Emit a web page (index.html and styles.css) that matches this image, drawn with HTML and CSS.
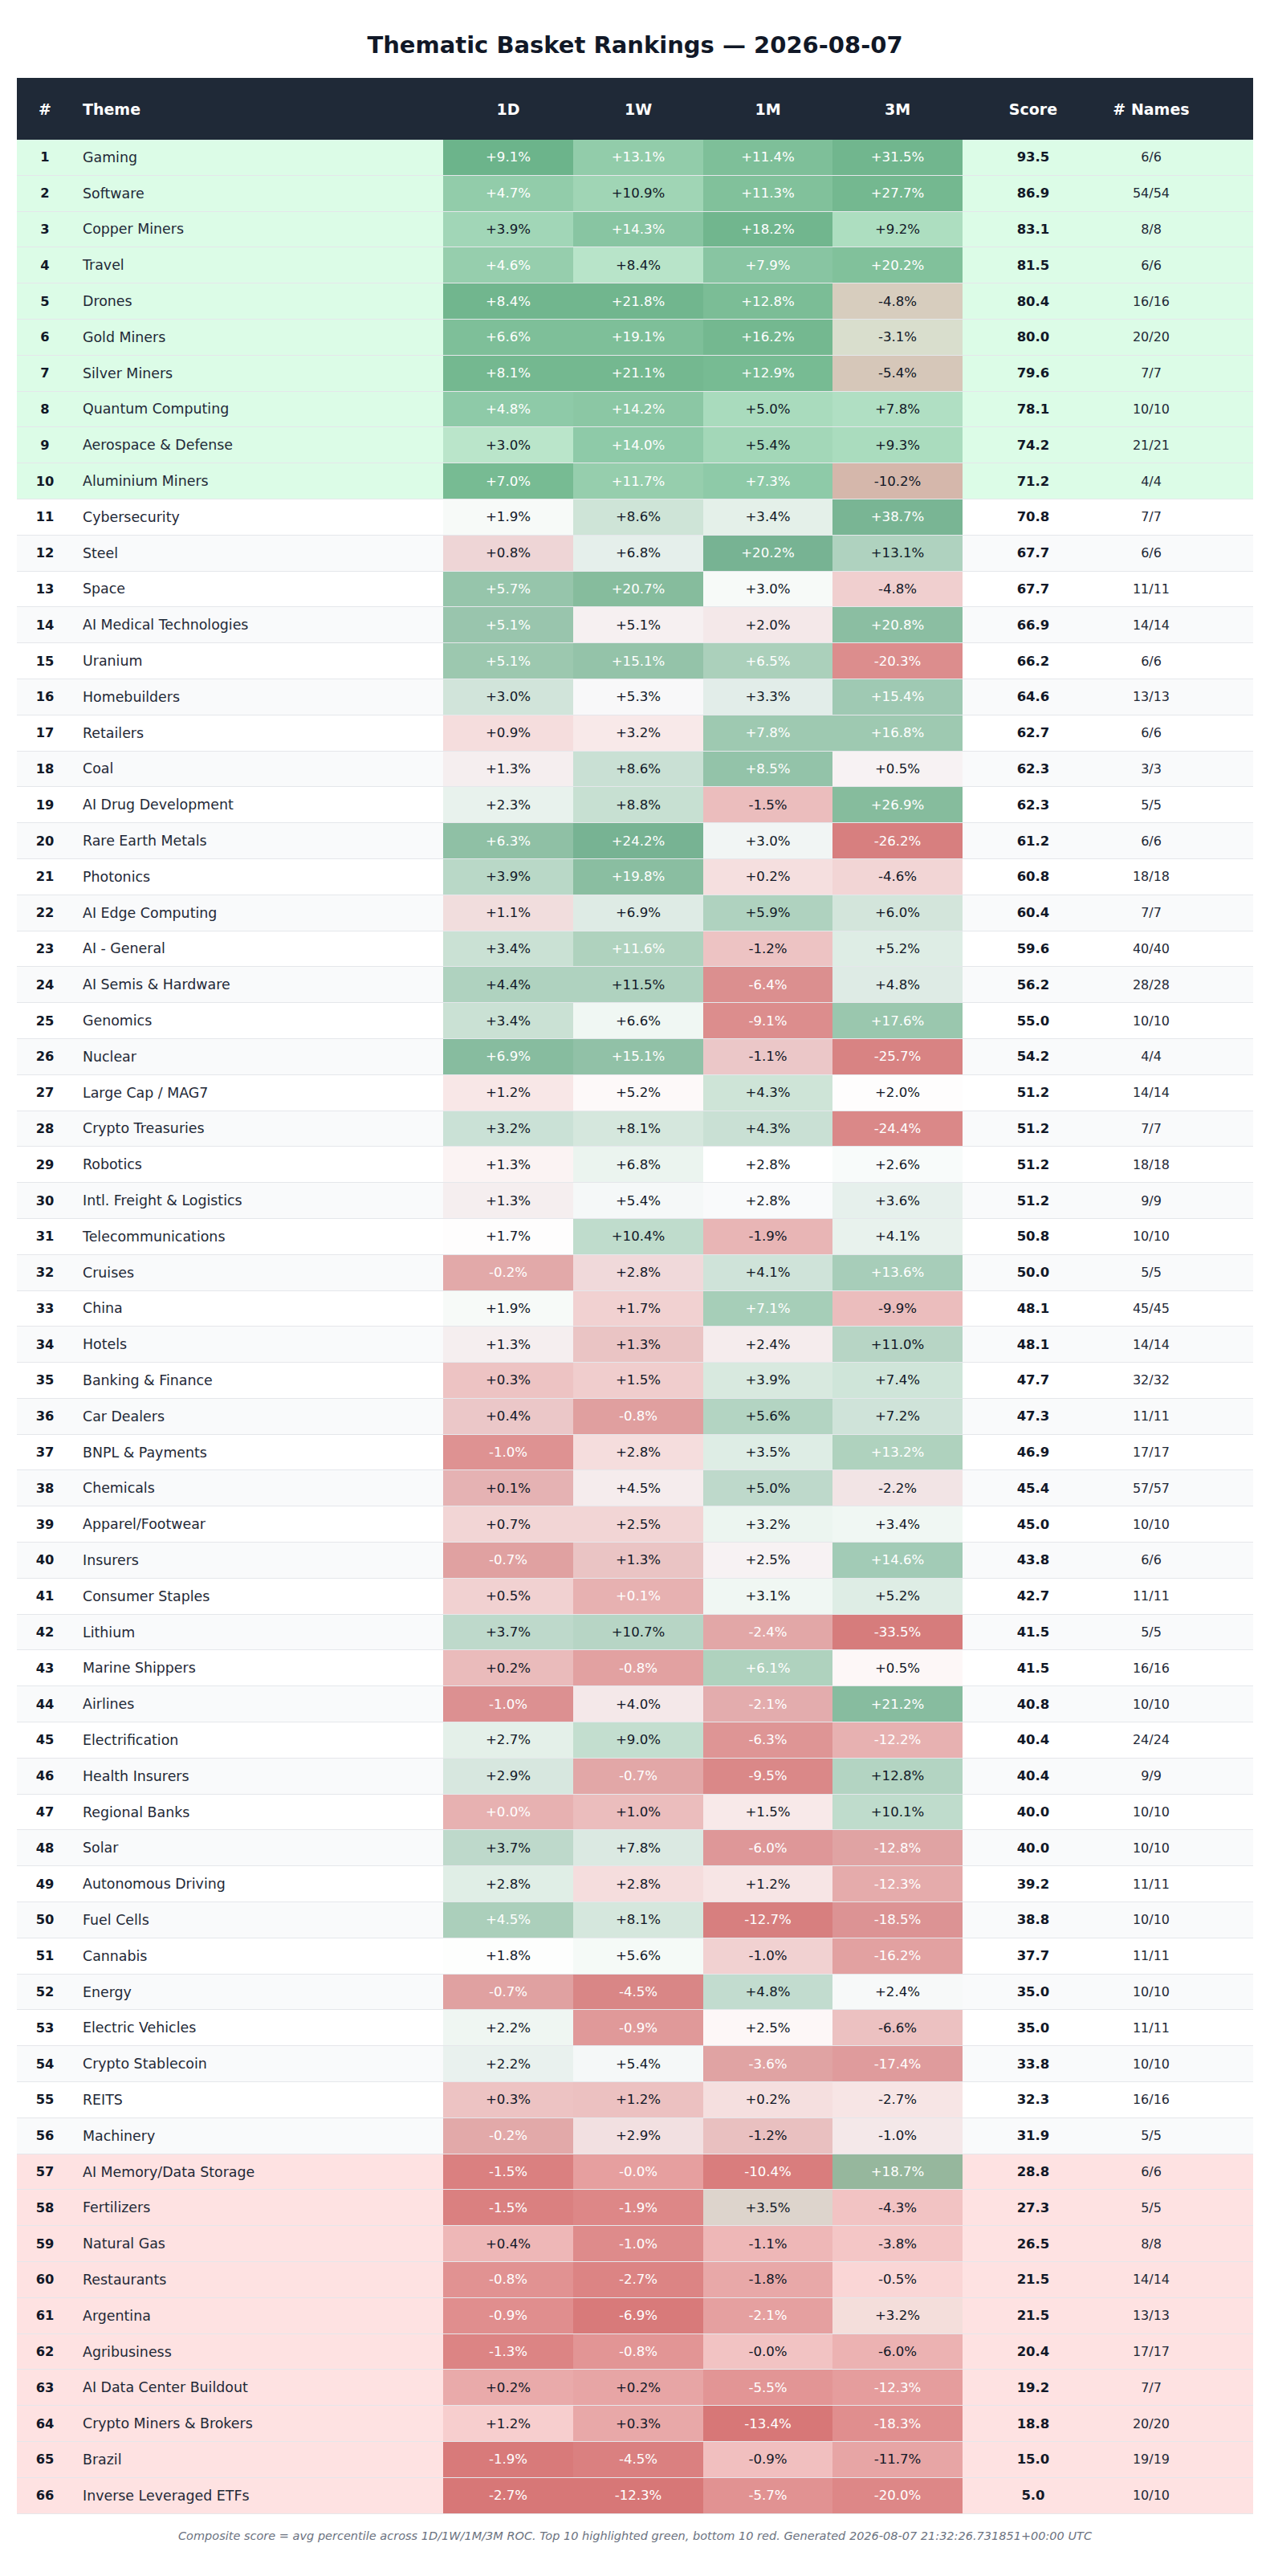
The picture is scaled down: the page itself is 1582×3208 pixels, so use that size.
FILE: index.html
```html
<!DOCTYPE html>
<html lang="en">
<head>
<meta charset="utf-8">
<title>Thematic Basket Rankings — 2026-08-07</title>
<link rel="stylesheet" href="styles.css">
</head>
<body>
<main class="page">
  <h1 class="title">Thematic Basket Rankings — 2026-08-07</h1>
  <table class="rankings">
    <colgroup>
      <col class="c-rank"><col class="c-theme"><col class="c-ret"><col class="c-ret"><col class="c-ret-narrow"><col class="c-ret"><col class="c-score"><col class="c-names">
    </colgroup>
    <thead>
      <tr><th>#</th><th class="th-theme">Theme</th><th>1D</th><th>1W</th><th>1M</th><th>3M</th><th>Score</th><th class="th-names"># Names</th></tr>
    </thead>
    <tbody>
      <tr class="row-top"><td class="rank">1</td><td class="theme">Gaming</td><td class="ret">+9.1%</td><td class="ret">+13.1%</td><td class="ret">+11.4%</td><td class="ret">+31.5%</td><td class="score">93.5</td><td class="names">6/6</td></tr>
      <tr class="row-top"><td class="rank">2</td><td class="theme">Software</td><td class="ret">+4.7%</td><td class="ret">+10.9%</td><td class="ret">+11.3%</td><td class="ret">+27.7%</td><td class="score">86.9</td><td class="names">54/54</td></tr>
      <tr class="row-top"><td class="rank">3</td><td class="theme">Copper Miners</td><td class="ret">+3.9%</td><td class="ret">+14.3%</td><td class="ret">+18.2%</td><td class="ret">+9.2%</td><td class="score">83.1</td><td class="names">8/8</td></tr>
      <tr class="row-top"><td class="rank">4</td><td class="theme">Travel</td><td class="ret">+4.6%</td><td class="ret">+8.4%</td><td class="ret">+7.9%</td><td class="ret">+20.2%</td><td class="score">81.5</td><td class="names">6/6</td></tr>
      <tr class="row-top"><td class="rank">5</td><td class="theme">Drones</td><td class="ret">+8.4%</td><td class="ret">+21.8%</td><td class="ret">+12.8%</td><td class="ret">-4.8%</td><td class="score">80.4</td><td class="names">16/16</td></tr>
      <tr class="row-top"><td class="rank">6</td><td class="theme">Gold Miners</td><td class="ret">+6.6%</td><td class="ret">+19.1%</td><td class="ret">+16.2%</td><td class="ret">-3.1%</td><td class="score">80.0</td><td class="names">20/20</td></tr>
      <tr class="row-top"><td class="rank">7</td><td class="theme">Silver Miners</td><td class="ret">+8.1%</td><td class="ret">+21.1%</td><td class="ret">+12.9%</td><td class="ret">-5.4%</td><td class="score">79.6</td><td class="names">7/7</td></tr>
      <tr class="row-top"><td class="rank">8</td><td class="theme">Quantum Computing</td><td class="ret">+4.8%</td><td class="ret">+14.2%</td><td class="ret">+5.0%</td><td class="ret">+7.8%</td><td class="score">78.1</td><td class="names">10/10</td></tr>
      <tr class="row-top"><td class="rank">9</td><td class="theme">Aerospace &amp; Defense</td><td class="ret">+3.0%</td><td class="ret">+14.0%</td><td class="ret">+5.4%</td><td class="ret">+9.3%</td><td class="score">74.2</td><td class="names">21/21</td></tr>
      <tr class="row-top"><td class="rank">10</td><td class="theme">Aluminium Miners</td><td class="ret">+7.0%</td><td class="ret">+11.7%</td><td class="ret">+7.3%</td><td class="ret">-10.2%</td><td class="score">71.2</td><td class="names">4/4</td></tr>
      <tr><td class="rank">11</td><td class="theme">Cybersecurity</td><td class="ret">+1.9%</td><td class="ret">+8.6%</td><td class="ret">+3.4%</td><td class="ret">+38.7%</td><td class="score">70.8</td><td class="names">7/7</td></tr>
      <tr><td class="rank">12</td><td class="theme">Steel</td><td class="ret">+0.8%</td><td class="ret">+6.8%</td><td class="ret">+20.2%</td><td class="ret">+13.1%</td><td class="score">67.7</td><td class="names">6/6</td></tr>
      <tr><td class="rank">13</td><td class="theme">Space</td><td class="ret">+5.7%</td><td class="ret">+20.7%</td><td class="ret">+3.0%</td><td class="ret">-4.8%</td><td class="score">67.7</td><td class="names">11/11</td></tr>
      <tr><td class="rank">14</td><td class="theme">AI Medical Technologies</td><td class="ret">+5.1%</td><td class="ret">+5.1%</td><td class="ret">+2.0%</td><td class="ret">+20.8%</td><td class="score">66.9</td><td class="names">14/14</td></tr>
      <tr><td class="rank">15</td><td class="theme">Uranium</td><td class="ret">+5.1%</td><td class="ret">+15.1%</td><td class="ret">+6.5%</td><td class="ret">-20.3%</td><td class="score">66.2</td><td class="names">6/6</td></tr>
      <tr><td class="rank">16</td><td class="theme">Homebuilders</td><td class="ret">+3.0%</td><td class="ret">+5.3%</td><td class="ret">+3.3%</td><td class="ret">+15.4%</td><td class="score">64.6</td><td class="names">13/13</td></tr>
      <tr><td class="rank">17</td><td class="theme">Retailers</td><td class="ret">+0.9%</td><td class="ret">+3.2%</td><td class="ret">+7.8%</td><td class="ret">+16.8%</td><td class="score">62.7</td><td class="names">6/6</td></tr>
      <tr><td class="rank">18</td><td class="theme">Coal</td><td class="ret">+1.3%</td><td class="ret">+8.6%</td><td class="ret">+8.5%</td><td class="ret">+0.5%</td><td class="score">62.3</td><td class="names">3/3</td></tr>
      <tr><td class="rank">19</td><td class="theme">AI Drug Development</td><td class="ret">+2.3%</td><td class="ret">+8.8%</td><td class="ret">-1.5%</td><td class="ret">+26.9%</td><td class="score">62.3</td><td class="names">5/5</td></tr>
      <tr><td class="rank">20</td><td class="theme">Rare Earth Metals</td><td class="ret">+6.3%</td><td class="ret">+24.2%</td><td class="ret">+3.0%</td><td class="ret">-26.2%</td><td class="score">61.2</td><td class="names">6/6</td></tr>
      <tr><td class="rank">21</td><td class="theme">Photonics</td><td class="ret">+3.9%</td><td class="ret">+19.8%</td><td class="ret">+0.2%</td><td class="ret">-4.6%</td><td class="score">60.8</td><td class="names">18/18</td></tr>
      <tr><td class="rank">22</td><td class="theme">AI Edge Computing</td><td class="ret">+1.1%</td><td class="ret">+6.9%</td><td class="ret">+5.9%</td><td class="ret">+6.0%</td><td class="score">60.4</td><td class="names">7/7</td></tr>
      <tr><td class="rank">23</td><td class="theme">AI - General</td><td class="ret">+3.4%</td><td class="ret">+11.6%</td><td class="ret">-1.2%</td><td class="ret">+5.2%</td><td class="score">59.6</td><td class="names">40/40</td></tr>
      <tr><td class="rank">24</td><td class="theme">AI Semis &amp; Hardware</td><td class="ret">+4.4%</td><td class="ret">+11.5%</td><td class="ret">-6.4%</td><td class="ret">+4.8%</td><td class="score">56.2</td><td class="names">28/28</td></tr>
      <tr><td class="rank">25</td><td class="theme">Genomics</td><td class="ret">+3.4%</td><td class="ret">+6.6%</td><td class="ret">-9.1%</td><td class="ret">+17.6%</td><td class="score">55.0</td><td class="names">10/10</td></tr>
      <tr><td class="rank">26</td><td class="theme">Nuclear</td><td class="ret">+6.9%</td><td class="ret">+15.1%</td><td class="ret">-1.1%</td><td class="ret">-25.7%</td><td class="score">54.2</td><td class="names">4/4</td></tr>
      <tr><td class="rank">27</td><td class="theme">Large Cap / MAG7</td><td class="ret">+1.2%</td><td class="ret">+5.2%</td><td class="ret">+4.3%</td><td class="ret">+2.0%</td><td class="score">51.2</td><td class="names">14/14</td></tr>
      <tr><td class="rank">28</td><td class="theme">Crypto Treasuries</td><td class="ret">+3.2%</td><td class="ret">+8.1%</td><td class="ret">+4.3%</td><td class="ret">-24.4%</td><td class="score">51.2</td><td class="names">7/7</td></tr>
      <tr><td class="rank">29</td><td class="theme">Robotics</td><td class="ret">+1.3%</td><td class="ret">+6.8%</td><td class="ret">+2.8%</td><td class="ret">+2.6%</td><td class="score">51.2</td><td class="names">18/18</td></tr>
      <tr><td class="rank">30</td><td class="theme">Intl. Freight &amp; Logistics</td><td class="ret">+1.3%</td><td class="ret">+5.4%</td><td class="ret">+2.8%</td><td class="ret">+3.6%</td><td class="score">51.2</td><td class="names">9/9</td></tr>
      <tr><td class="rank">31</td><td class="theme">Telecommunications</td><td class="ret">+1.7%</td><td class="ret">+10.4%</td><td class="ret">-1.9%</td><td class="ret">+4.1%</td><td class="score">50.8</td><td class="names">10/10</td></tr>
      <tr><td class="rank">32</td><td class="theme">Cruises</td><td class="ret">-0.2%</td><td class="ret">+2.8%</td><td class="ret">+4.1%</td><td class="ret">+13.6%</td><td class="score">50.0</td><td class="names">5/5</td></tr>
      <tr><td class="rank">33</td><td class="theme">China</td><td class="ret">+1.9%</td><td class="ret">+1.7%</td><td class="ret">+7.1%</td><td class="ret">-9.9%</td><td class="score">48.1</td><td class="names">45/45</td></tr>
      <tr><td class="rank">34</td><td class="theme">Hotels</td><td class="ret">+1.3%</td><td class="ret">+1.3%</td><td class="ret">+2.4%</td><td class="ret">+11.0%</td><td class="score">48.1</td><td class="names">14/14</td></tr>
      <tr><td class="rank">35</td><td class="theme">Banking &amp; Finance</td><td class="ret">+0.3%</td><td class="ret">+1.5%</td><td class="ret">+3.9%</td><td class="ret">+7.4%</td><td class="score">47.7</td><td class="names">32/32</td></tr>
      <tr><td class="rank">36</td><td class="theme">Car Dealers</td><td class="ret">+0.4%</td><td class="ret">-0.8%</td><td class="ret">+5.6%</td><td class="ret">+7.2%</td><td class="score">47.3</td><td class="names">11/11</td></tr>
      <tr><td class="rank">37</td><td class="theme">BNPL &amp; Payments</td><td class="ret">-1.0%</td><td class="ret">+2.8%</td><td class="ret">+3.5%</td><td class="ret">+13.2%</td><td class="score">46.9</td><td class="names">17/17</td></tr>
      <tr><td class="rank">38</td><td class="theme">Chemicals</td><td class="ret">+0.1%</td><td class="ret">+4.5%</td><td class="ret">+5.0%</td><td class="ret">-2.2%</td><td class="score">45.4</td><td class="names">57/57</td></tr>
      <tr><td class="rank">39</td><td class="theme">Apparel/Footwear</td><td class="ret">+0.7%</td><td class="ret">+2.5%</td><td class="ret">+3.2%</td><td class="ret">+3.4%</td><td class="score">45.0</td><td class="names">10/10</td></tr>
      <tr><td class="rank">40</td><td class="theme">Insurers</td><td class="ret">-0.7%</td><td class="ret">+1.3%</td><td class="ret">+2.5%</td><td class="ret">+14.6%</td><td class="score">43.8</td><td class="names">6/6</td></tr>
      <tr><td class="rank">41</td><td class="theme">Consumer Staples</td><td class="ret">+0.5%</td><td class="ret">+0.1%</td><td class="ret">+3.1%</td><td class="ret">+5.2%</td><td class="score">42.7</td><td class="names">11/11</td></tr>
      <tr><td class="rank">42</td><td class="theme">Lithium</td><td class="ret">+3.7%</td><td class="ret">+10.7%</td><td class="ret">-2.4%</td><td class="ret">-33.5%</td><td class="score">41.5</td><td class="names">5/5</td></tr>
      <tr><td class="rank">43</td><td class="theme">Marine Shippers</td><td class="ret">+0.2%</td><td class="ret">-0.8%</td><td class="ret">+6.1%</td><td class="ret">+0.5%</td><td class="score">41.5</td><td class="names">16/16</td></tr>
      <tr><td class="rank">44</td><td class="theme">Airlines</td><td class="ret">-1.0%</td><td class="ret">+4.0%</td><td class="ret">-2.1%</td><td class="ret">+21.2%</td><td class="score">40.8</td><td class="names">10/10</td></tr>
      <tr><td class="rank">45</td><td class="theme">Electrification</td><td class="ret">+2.7%</td><td class="ret">+9.0%</td><td class="ret">-6.3%</td><td class="ret">-12.2%</td><td class="score">40.4</td><td class="names">24/24</td></tr>
      <tr><td class="rank">46</td><td class="theme">Health Insurers</td><td class="ret">+2.9%</td><td class="ret">-0.7%</td><td class="ret">-9.5%</td><td class="ret">+12.8%</td><td class="score">40.4</td><td class="names">9/9</td></tr>
      <tr><td class="rank">47</td><td class="theme">Regional Banks</td><td class="ret">+0.0%</td><td class="ret">+1.0%</td><td class="ret">+1.5%</td><td class="ret">+10.1%</td><td class="score">40.0</td><td class="names">10/10</td></tr>
      <tr><td class="rank">48</td><td class="theme">Solar</td><td class="ret">+3.7%</td><td class="ret">+7.8%</td><td class="ret">-6.0%</td><td class="ret">-12.8%</td><td class="score">40.0</td><td class="names">10/10</td></tr>
      <tr><td class="rank">49</td><td class="theme">Autonomous Driving</td><td class="ret">+2.8%</td><td class="ret">+2.8%</td><td class="ret">+1.2%</td><td class="ret">-12.3%</td><td class="score">39.2</td><td class="names">11/11</td></tr>
      <tr><td class="rank">50</td><td class="theme">Fuel Cells</td><td class="ret">+4.5%</td><td class="ret">+8.1%</td><td class="ret">-12.7%</td><td class="ret">-18.5%</td><td class="score">38.8</td><td class="names">10/10</td></tr>
      <tr><td class="rank">51</td><td class="theme">Cannabis</td><td class="ret">+1.8%</td><td class="ret">+5.6%</td><td class="ret">-1.0%</td><td class="ret">-16.2%</td><td class="score">37.7</td><td class="names">11/11</td></tr>
      <tr><td class="rank">52</td><td class="theme">Energy</td><td class="ret">-0.7%</td><td class="ret">-4.5%</td><td class="ret">+4.8%</td><td class="ret">+2.4%</td><td class="score">35.0</td><td class="names">10/10</td></tr>
      <tr><td class="rank">53</td><td class="theme">Electric Vehicles</td><td class="ret">+2.2%</td><td class="ret">-0.9%</td><td class="ret">+2.5%</td><td class="ret">-6.6%</td><td class="score">35.0</td><td class="names">11/11</td></tr>
      <tr><td class="rank">54</td><td class="theme">Crypto Stablecoin</td><td class="ret">+2.2%</td><td class="ret">+5.4%</td><td class="ret">-3.6%</td><td class="ret">-17.4%</td><td class="score">33.8</td><td class="names">10/10</td></tr>
      <tr><td class="rank">55</td><td class="theme">REITS</td><td class="ret">+0.3%</td><td class="ret">+1.2%</td><td class="ret">+0.2%</td><td class="ret">-2.7%</td><td class="score">32.3</td><td class="names">16/16</td></tr>
      <tr><td class="rank">56</td><td class="theme">Machinery</td><td class="ret">-0.2%</td><td class="ret">+2.9%</td><td class="ret">-1.2%</td><td class="ret">-1.0%</td><td class="score">31.9</td><td class="names">5/5</td></tr>
      <tr class="row-bottom"><td class="rank">57</td><td class="theme">AI Memory/Data Storage</td><td class="ret">-1.5%</td><td class="ret">-0.0%</td><td class="ret">-10.4%</td><td class="ret">+18.7%</td><td class="score">28.8</td><td class="names">6/6</td></tr>
      <tr class="row-bottom"><td class="rank">58</td><td class="theme">Fertilizers</td><td class="ret">-1.5%</td><td class="ret">-1.9%</td><td class="ret">+3.5%</td><td class="ret">-4.3%</td><td class="score">27.3</td><td class="names">5/5</td></tr>
      <tr class="row-bottom"><td class="rank">59</td><td class="theme">Natural Gas</td><td class="ret">+0.4%</td><td class="ret">-1.0%</td><td class="ret">-1.1%</td><td class="ret">-3.8%</td><td class="score">26.5</td><td class="names">8/8</td></tr>
      <tr class="row-bottom"><td class="rank">60</td><td class="theme">Restaurants</td><td class="ret">-0.8%</td><td class="ret">-2.7%</td><td class="ret">-1.8%</td><td class="ret">-0.5%</td><td class="score">21.5</td><td class="names">14/14</td></tr>
      <tr class="row-bottom"><td class="rank">61</td><td class="theme">Argentina</td><td class="ret">-0.9%</td><td class="ret">-6.9%</td><td class="ret">-2.1%</td><td class="ret">+3.2%</td><td class="score">21.5</td><td class="names">13/13</td></tr>
      <tr class="row-bottom"><td class="rank">62</td><td class="theme">Agribusiness</td><td class="ret">-1.3%</td><td class="ret">-0.8%</td><td class="ret">-0.0%</td><td class="ret">-6.0%</td><td class="score">20.4</td><td class="names">17/17</td></tr>
      <tr class="row-bottom"><td class="rank">63</td><td class="theme">AI Data Center Buildout</td><td class="ret">+0.2%</td><td class="ret">+0.2%</td><td class="ret">-5.5%</td><td class="ret">-12.3%</td><td class="score">19.2</td><td class="names">7/7</td></tr>
      <tr class="row-bottom"><td class="rank">64</td><td class="theme">Crypto Miners &amp; Brokers</td><td class="ret">+1.2%</td><td class="ret">+0.3%</td><td class="ret">-13.4%</td><td class="ret">-18.3%</td><td class="score">18.8</td><td class="names">20/20</td></tr>
      <tr class="row-bottom"><td class="rank">65</td><td class="theme">Brazil</td><td class="ret">-1.9%</td><td class="ret">-4.5%</td><td class="ret">-0.9%</td><td class="ret">-11.7%</td><td class="score">15.0</td><td class="names">19/19</td></tr>
      <tr class="row-bottom"><td class="rank">66</td><td class="theme">Inverse Leveraged ETFs</td><td class="ret">-2.7%</td><td class="ret">-12.3%</td><td class="ret">-5.7%</td><td class="ret">-20.0%</td><td class="score">5.0</td><td class="names">10/10</td></tr>
    </tbody>
  </table>
  <p class="note">Composite score = avg percentile across 1D/1W/1M/3M ROC. Top 10 highlighted green, bottom 10 red. Generated 2026-08-07 21:32:26.731851+00:00 UTC</p>
</main>
<script src="script.js"></script>
</body>
</html>
```

FILE: styles.css
```css
html, body {
  margin: 0;
  padding: 0;
  background: #ffffff;
}

body {
  font-family: "DejaVu Sans", "Noto Sans", sans-serif;
  color: #1f2937;
}

.page {
  padding: 0 21px;
}

.title {
  margin: 0;
  padding: 39px 0 24px;
  font-size: 29px;
  line-height: 34px;
  font-weight: 700;
  text-align: center;
  color: #111827;
}

.rankings {
  width: 1540px;
  border-collapse: separate;
  border-spacing: 0;
  table-layout: fixed;
}

.c-rank { width: 70px; }
.c-theme { width: 461px; }
.c-ret { width: 162px; }
.c-ret-narrow { width: 161px; }
.c-score { width: 176px; }
.c-names { width: 186px; }

.rankings th {
  height: 77px;
  padding: 0;
  background: #1f2937;
  color: #ffffff;
  font-size: 19px;
  font-weight: 700;
  text-align: center;
  vertical-align: middle;
}

.rankings th.th-theme {
  text-align: left;
  padding-left: 12px;
}

.rankings th.th-names {
  padding-right: 68px;
}

.rankings td {
  box-sizing: border-box;
  height: 44.8px;
  padding: 0;
  border-bottom: 1px solid #e5e7eb;
  text-align: center;
  vertical-align: middle;
  white-space: nowrap;
}

.rankings tbody tr {
  background: #ffffff;
}

.rankings tbody tr:nth-child(even) {
  background: #f9fafb;
}

.rankings tbody tr.row-top {
  background: #dcfce7;
}

.rankings tbody tr.row-bottom {
  background: #fee2e2;
}

.rank {
  font-size: 16.3px;
  font-weight: 700;
  color: #111827;
}

.rankings td.theme {
  text-align: left;
  padding-left: 12px;
  font-size: 17.4px;
  color: #1f2937;
}

.ret {
  font-size: 16.6px;
  color: #111827;
}

.ret.on-strong {
  color: #ffffff;
}

.score {
  font-size: 16.5px;
  font-weight: 700;
  color: #111827;
}

.rankings td.names {
  padding-right: 68px;
  font-size: 16px;
  color: #1f2937;
}

.note {
  margin: 19px 0 0;
  font-size: 14.5px;
  line-height: 17px;
  font-style: italic;
  color: #6b7280;
  text-align: center;
}
```

FILE: script.js
```js
(function () {
  var rows = Array.prototype.slice.call(document.querySelectorAll('.rankings tbody tr'));
  var n = rows.length;
  for (var c = 2; c <= 5; c++) {
    var cells = rows.map(function (r) { return r.children[c]; });
    var vals = cells.map(function (td) { return parseFloat(td.textContent); });
    var order = vals.map(function (v, i) { return i; });
    order.sort(function (a, b) { return vals[a] - vals[b]; });
    var ranks = new Array(n);
    var i = 0;
    while (i < n) {
      var j = i;
      while (j + 1 < n && vals[order[j + 1]] === vals[order[i]]) { j++; }
      var avg = (i + j) / 2;
      for (var k = i; k <= j; k++) { ranks[order[k]] = avg; }
      i = j + 1;
    }
    cells.forEach(function (td, idx) {
      var d = 2 * ranks[idx] / (n - 1) - 1;
      if (d >= 0) {
        td.style.backgroundColor = 'rgba(46, 139, 87, ' + (d * 0.64).toFixed(3) + ')';
      } else {
        td.style.backgroundColor = 'rgba(205, 92, 92, ' + (-d * 0.8).toFixed(3) + ')';
      }
      if (Math.abs(d) >= 0.585) { td.classList.add('on-strong'); }
    });
  }
})();
```
